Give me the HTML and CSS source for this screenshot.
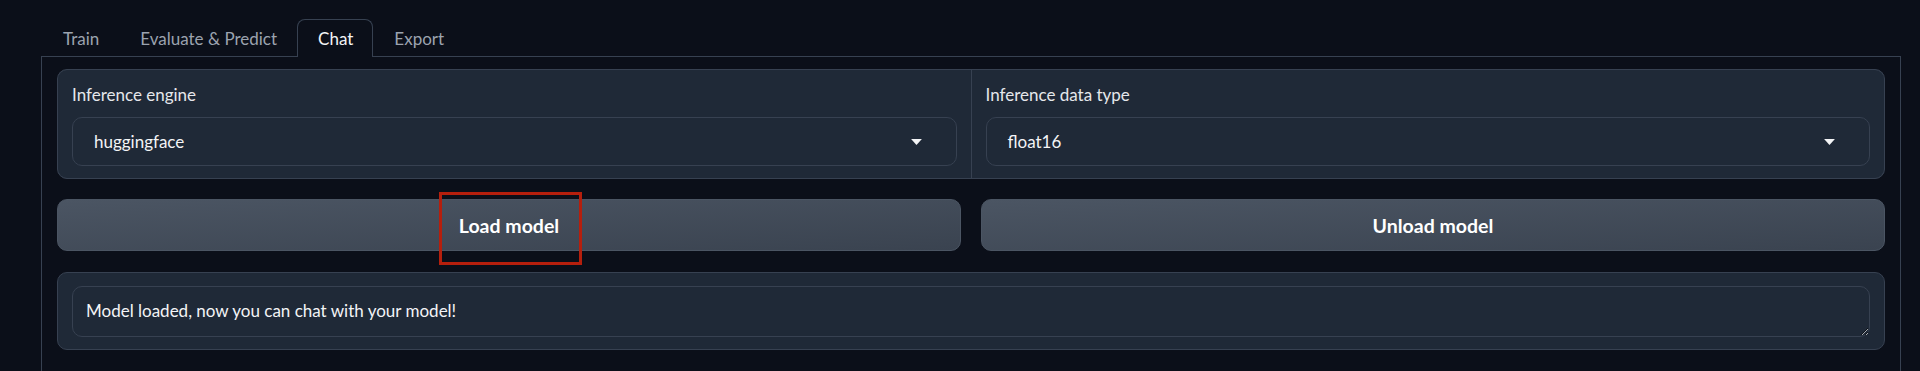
FILE: index.html
```html
<!DOCTYPE html>
<html lang="en">
<head>
    <meta charset="UTF-8">
    <meta name="viewport" content="width=device-width, initial-scale=1.0">
    <title>Chat</title>
    <link rel="stylesheet" href="styles.css">
</head>
<body>
    <div class="app">
        <div class="tab-nav">
            <button class="tab">Train</button>
            <button class="tab">Evaluate &amp; Predict</button>
            <button class="tab selected">Chat</button>
            <button class="tab">Export</button>
        </div>

        <div class="tab-panel">
            <div class="form">
                <div class="block">
                    <span class="label">Inference engine</span>
                    <div class="dropdown">
                        <span>huggingface</span>
                        <svg class="arrow" viewBox="0 0 18 10" width="11" height="6"><path d="M0 0 L18 0 L9 10 Z" fill="currentColor"/></svg>
                    </div>
                </div>
                <div class="block">
                    <span class="label">Inference data type</span>
                    <div class="dropdown">
                        <span>float16</span>
                        <svg class="arrow" viewBox="0 0 18 10" width="11" height="6"><path d="M0 0 L18 0 L9 10 Z" fill="currentColor"/></svg>
                    </div>
                </div>
            </div>

            <div class="btn-row">
                <div class="btn-wrap">
                    <button class="btn">Load model</button>
                    <span class="highlight"></span>
                </div>
                <div class="btn-wrap">
                    <button class="btn">Unload model</button>
                </div>
            </div>

            <div class="block textbox">
                <textarea rows="1">Model loaded, now you can chat with your model!</textarea>
            </div>
        </div>
    </div>
</body>
</html>
```

FILE: styles.css
```css
* {
    margin: 0;
    padding: 0;
    box-sizing: border-box;
    font-family: 'Lato', 'Open Sans', sans-serif;
}

html, body {
    height: 371px;
    overflow: hidden;
}

body {
    background: #0b0f19;
    color: #f3f4f6;
}

.app {
    padding: 19px 19px 0 41px;
}

/* Tabs */
.tab-nav {
    display: flex;
    padding-left: 1px;
    height: 37px;
}

.tab {
    background: transparent;
    border: 1px solid transparent;
    border-bottom: none;
    border-radius: 8px 8px 0 0;
    color: #9ca3af;
    font-size: 17px;
    padding: 0 19px 0 20px;
    height: 38px;
    position: relative;
    z-index: 1;
    cursor: pointer;
}

.tab.selected {
    color: #f3f4f6;
    border-color: #374151;
    background: #0b0f19;
}

.tab-panel {
    border: 1px solid #374151;
    padding: 12px 15px 40px;
    display: flex;
    flex-direction: column;
    gap: 20px;
    min-height: 400px;
}

/* Dropdown form */
.form {
    display: grid;
    grid-template-columns: 1fr 1fr;
    gap: 1px;
    background: #374151;
    border: 1px solid #374151;
    border-radius: 10px;
    overflow: hidden;
}

.block {
    background: #1f2937;
    padding: 14px 14px 12px;
}

.label {
    display: block;
    color: #e5e7eb;
    font-size: 17px;
    line-height: 22px;
    margin-bottom: 11px;
}

.dropdown {
    display: flex;
    align-items: center;
    justify-content: space-between;
    height: 49px;
    padding: 0 34px 0 21px;
    border: 1px solid #374151;
    border-radius: 10px;
    background: #1f2937;
    font-size: 17px;
    color: #f3f4f6;
}

.arrow {
    color: #f3f4f6;
}

/* Buttons */
.btn-row {
    display: grid;
    grid-template-columns: 1fr 1fr;
    gap: 20px;
}

.btn-wrap {
    position: relative;
}

.btn {
    width: 100%;
    height: 52px;
    background: linear-gradient(to bottom right, #4b5563, #3a4350);
    border: 1px solid #4b5563;
    border-radius: 10px;
    color: #ffffff;
    font-size: 19.5px;
    font-weight: 700;
    cursor: pointer;
}

.highlight {
    position: absolute;
    left: 50%;
    top: -7px;
    width: 143px;
    height: 73px;
    margin-left: -70px;
    border: 3px solid #b51f0d;
    pointer-events: none;
}

/* Textbox */
.textbox {
    margin-top: 1px;
    border: 1px solid #374151;
    border-radius: 10px;
    padding: 13px 14px 12px;
}

.textbox textarea {
    display: block;
    width: 100%;
    height: 51px;
    background: #1f2937;
    border: 1px solid #374151;
    border-radius: 10px;
    color: #f3f4f6;
    font-size: 17px;
    line-height: 22px;
    padding: 13px 13px 11px;
    resize: vertical;
    outline: none;
    color-scheme: dark;
}
```
